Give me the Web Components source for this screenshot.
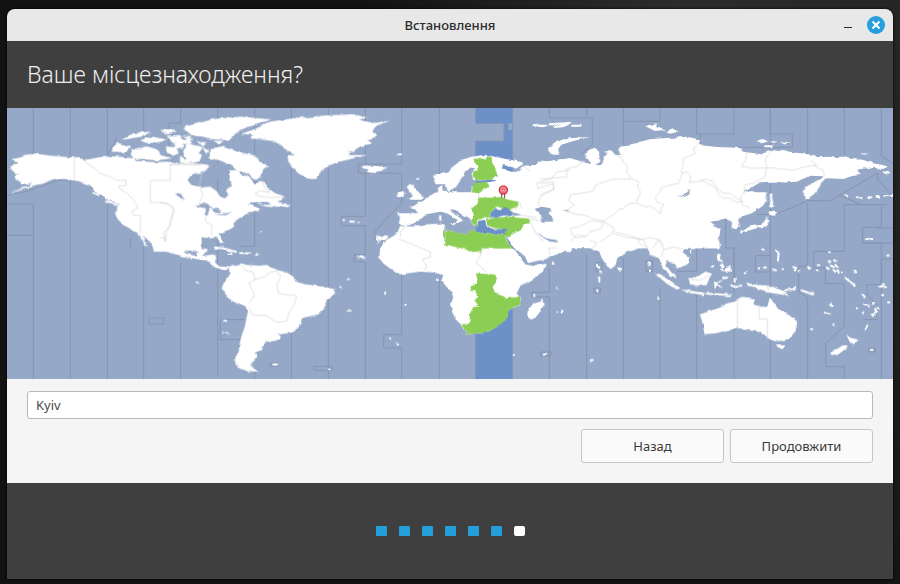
<!DOCTYPE html>
<html lang="uk">
<head>
<meta charset="utf-8">
<meta name="viewport" content="width=device-width, initial-scale=1">
<title>Встановлення</title>
<style>
  html { height: 100%; background: #131313; }
  body {
    margin: 0; min-height: 100%; box-sizing: border-box; padding: 9px 7px 5px;
    display: flex; font-family: "Noto Sans", "Open Sans", sans-serif; font-size: 13px;
    background:
      linear-gradient(90deg, transparent 40%, #2c2c2c 75%, #252525) top / 100% 10px no-repeat,
      linear-gradient(#262624, #1f1e1b 60%, #151515) right / 12px 100% no-repeat,
      #121212;
  }
  installer-window { flex: 1; }
</style>
</head>
<body>
<installer-window>
  <title-bar slot="titlebar">Встановлення</title-bar>
  <page-heading slot="heading">Ваше місцезнаходження?</page-heading>
  <zone-map></zone-map>
  <location-form></location-form>
  <step-dots slot="footer" total="7" done="6"></step-dots>
</installer-window>

<template id="map-template">
<style>
  :host { display: block; background: #95a8c7; }
  svg { display: block; width: 100%; height: auto; }
  .lines path { fill: none; stroke: #8595b1; stroke-width: 3; }
  .borders path { fill: none; stroke: #d2d2d2; stroke-width: 2; stroke-linejoin: round; }
  .land { fill: #fff; }
  .sea { fill: #95a8c7; }
  .zone { fill: #6d90c8; }
  .green { fill: #8bce53; }
  .isles { fill: none; stroke: #fff; stroke-width: 6; stroke-linecap: round; }
</style>
<svg viewBox="0 0 2658 813" role="img" aria-label="Карта часових поясів">
  <defs>
    <filter id="coast" filterUnits="userSpaceOnUse" x="0" y="0" width="2658" height="813" color-interpolation-filters="sRGB">
      <feTurbulence type="fractalNoise" baseFrequency="0.05" numOctaves="3" seed="4" result="n"/>
      <feDisplacementMap in="SourceGraphic" in2="n" scale="10" xChannelSelector="R" yChannelSelector="G"/>
    </filter>
  </defs>
  <path class="zone" d="M1406,0H1517V46H1504V66H1517V813H1406V99H1491V46H1406Z"/>
  <!-- zone limits over the sea -->
  <g class="lines">
    <path d="M79,0V137M190,0V150M190,210V813M301,0V140L330,90M410,0V70M301,265V813M-5,288H79V382H-5M79,382V813M0,262L60,250 150,218 190,215M410,400V813"/>
    <path d="M521,0V45H487V118M521,465V813M632,0V800M743,0V415M743,790V813M853,0V813M964,0V813M1075,0V168H1054V196H1184M1075,196V325H1003V353H1075V440H1041V462H1075V813M743,415H700M370,390V420H378"/>
    <path d="M1184,0V168H1075M1184,196V285L1104,370V395M1184,500V680H1130V720H1184V813M1297,0V200M1297,510V813M1406,680V813M1517,0V160M1517,590V813M1406,0V46H1491V99H1406V140M1627,480V553H1575V567H1627V813"/>
    <path d="M1627,0V30H1756V110L1720,140M1739,0V30M1739,440V813M1849,0V110M1959,0V40H1849M1849,450V813M1959,540V813M2069,0V78H2181V0M2069,490H2010M2069,490V420M2069,560V813M2181,813V600M2181,560V420H2156V300M2181,420V510M2290,0V78H2356V118H2180M2402,0V150M2402,285V475H2375V550L2402,570V813M2512,0V150M2512,290H2640M2623,0V145L2658,165M2080,78V112M2402,278L2310,318 2250,320M2402,278H2470L2612,195M2612,195V215L2658,265M2492,260L2560,289M2290,0V813"/>
    <path d="M2290,443H2245V492H2290M2512,430H2420V480H2455V527H2512V655L2456,705V776H2512V813M2623,290V358H2567V405H2623V530H2580V560L2610,590V635H2570M2658,453H2623V813M2567,405H2658M2512,290V430M2607,360H2658"/>
    <path d="M790,765H815V775H790ZM921,775H975V787H921ZM640,635H712M640,635V695H700M1600,732H1632V744H1600ZM1767,463H1785V492H1767ZM1761,540H1780V555H1761ZM1917,458H1937V490H1917ZM2585,720H2605V732H2585ZM425,630H470V648H425Z"/>
  </g>
  <g filter="url(#coast)">
    <!-- Alaska, western Canada and USA -->
    <g transform="translate(-21 -9)">
      <path class="land" d="M26,184L52,178 42,166 38,162 60,158 72,150 104,146 150,152 222,158 262,164 300,156 350,154 400,160 420,168 470,172 500,170 530,176 560,172 605,178V206L575,208 562,225 575,240 605,246V440H462L455,415 440,400 428,392 434,410 444,424 436,422 422,400 414,382 400,378 375,362 355,345 345,325 350,305 357,298 340,290 322,285 306,272 285,258 270,240 235,228 195,222 170,220 150,226 130,236 118,238 105,240 90,246 60,256 28,268 55,254 80,244 98,236 65,236 60,230 45,222 46,212 60,205 45,204 38,194Z"/>
      <path class="land" d="M335,140L340,122 355,114 380,120 395,126 375,142ZM395,134L440,124 470,132 482,150 515,160 470,166 400,160 390,146ZM360,105L400,85 452,80 430,94 380,102ZM420,106L455,94 500,104 475,112 440,114ZM482,75L510,72 530,80 500,88ZM500,92L540,90 550,105 580,100 570,118 520,116ZM498,124L530,128 536,145 520,152 500,142ZM550,130L590,120 610,128 590,150 555,148ZM540,155L560,168 600,160 590,172 540,172ZM555,75L600,50 610,95 570,90Z"/>
      <path class="isles" d="M280,262L295,270M318,290L352,300M288,248L310,268"/>
    </g>
    <!-- eastern Canada, Greenland -->
    <g transform="translate(459 -9)">
      <path class="land" d="M-5,170L40,178 80,178 125,180 150,184 135,195 125,205 95,205 82,225 90,240 120,248 150,245 170,258 180,275 195,280 205,270 198,255 215,240 208,208 235,205 265,215 285,238 300,228 312,235 325,250 345,263 374,275 365,285 352,290 368,294 392,298 385,306 350,302 330,306 305,302 292,290 262,298 285,305 302,313 270,322 250,332 235,340 220,352 222,365 205,375 175,385 185,400 192,414 182,416 170,395 150,397 120,394 70,397 62,405 60,440H-10Z"/>
      <path class="land" d="M68,66L110,56 160,42 240,35 332,43 300,56 262,66 240,76 220,92 200,106 160,102 110,92 80,78ZM148,134L185,124 230,140 285,152 295,168 328,182 306,196 302,218 280,222 262,205 230,196 212,180 180,166 150,160ZM75,120L100,116 106,130 84,140ZM70,150L100,136 126,150 118,170 80,172ZM40,118L65,112 70,128 50,130ZM110,110L140,112 130,125ZM160,106L190,108 178,118ZM206,195L232,196 240,208 216,210ZM128,130L144,134 140,148ZM30,90L56,96 64,106 34,104ZM70,92L94,94 86,106Z"/>
      <path class="land" d="M246,86L290,70 330,50 400,40 500,31 580,28 625,38 596,44 640,54 692,47 650,62 636,78 652,95 620,104 640,115 600,124 578,140 565,150 620,150 580,160 540,170 510,180 485,195 465,222 440,220 415,205 400,190 385,170 382,155 402,150 375,130 350,110 300,103 272,100 280,90Z"/>
      <path class="land" d="M603,188L615,182 650,184 682,189 650,204 620,202 626,194Z"/>
      <path class="sea" d="M105,302L130,294 158,304 147,312 143,332 134,330 138,312ZM155,310L178,312 182,326 162,322ZM170,331L220,320 198,330ZM48,262L64,268 72,286 58,276ZM560,143L612,138 590,134ZM150,196L172,176 190,186 205,182 196,200 210,214 180,220 150,218ZM298,292L322,290 330,298 308,302Z"/>
      <path class="isles" d="M304,381h1M550,345h2M571,350h10M594,353h1M650,395l14,3M664,400l18,-5"/>
    </g>
    <!-- Central and South America -->
    <g transform="translate(459 381)">
      <path class="land" d="M-14,-10H66L60,15 63,40 75,55 100,61 111,62 115,48 135,40 142,42 133,55 126,63 160,58 169,66 165,82 178,95 208,96 214,100 190,105 165,97 140,76 100,70 70,64 40,56 6,45 2,30Z"/>
      <path class="land" d="M208,102L215,92 240,85 260,90 300,92 320,90 350,105 380,112 400,125 407,140 440,148 490,155 522,162 525,175 500,195 492,222 475,238 430,248 415,275 395,292 360,298 350,293 363,305 355,317 315,320 305,335 307,345 285,352 292,368 274,385 280,400 298,409 262,409 238,400 222,375 236,350 240,320 250,290 258,255 265,225 240,210 210,195 195,175 185,160 190,145 207,125Z"/>
      <path class="isles" d="M165,37L190,40 228,50M240,54L270,55M205,56h10M290,57h4M564,133h1M541,156h1M562,229h8M192,257h6M187,292h1M200,292h3M340,388h14M506,404h6M598,66l14,4M110,142h1M655,20v1M658,65v2"/>
    </g>
    <!-- Europe and western Russia -->
    <g transform="translate(1089 -9)">
      <path class="land" d="M190,222L190,210 230,200 270,168 300,156 345,149 400,160 457,172 455,180 440,190 400,180 395,190 420,200 440,200 457,184 500,178 530,170 560,164 605,160V440H440L410,400 412,370 375,374 350,368 343,352 325,348 326,364 312,362 302,345 290,334 262,322 246,312 240,316 256,330 280,345 272,350 258,358 264,346 240,330 224,322 210,320 190,324 168,328 150,345 125,358 108,366 86,356 90,340 85,325 140,325 138,315 118,308 135,300 150,290 175,275 195,263 208,262 203,250 216,240 218,256 240,262 280,262 304,262 306,245 322,236 378,228 372,223 330,228 309,225 305,205 318,190 300,188 284,205 270,228 258,246 236,258 222,238 197,238Z"/>
      <path class="land" d="M118,238L134,236 132,248 146,262 160,276 150,284 115,284 128,272 118,258 110,246ZM80,275L84,262 104,258 106,268 98,278ZM-2,188L10,182 50,188 20,202ZM535,132L555,112 600,96 606,100 570,116 560,140 552,150ZM236,358L258,357 252,364ZM208,330L214,332 214,348 206,346Z"/>
      <path class="isles" d="M142,222h2M85,148h6M490,60L520,64M540,58L600,54M555,66L590,62M22,402l8,-5M38,404l14,-6"/>
    </g>
    <!-- northern and central Asia -->
    <g transform="translate(1599 -9)">
      <path class="land" d="M-5,170L30,168 90,160 110,165 130,172 156,178 146,165 134,150 145,135 165,128 176,142 181,170 165,181 186,180 192,160 202,144 190,140 216,138 226,150 242,150 235,135 240,125 265,122 285,114 330,103 370,100 400,98 440,95 480,105 476,120 530,126 605,130V330L594,346 601,366 580,364 575,346 560,340 546,336 540,346 510,350 524,360 514,366 530,380 536,395 534,430H-5Z"/>
      <path class="land" d="M24,136L50,112 90,100 150,96 100,108 70,118 50,134 58,150 34,148ZM316,64L350,54 350,64 378,74 345,78ZM378,82L400,72 418,80 390,86Z"/>
      <path class="isles" d="M0,62h20M30,58h25M60,62L90,54M96,62h25"/>
      <path class="sea" d="M-16,312L5,305 32,310 26,326 38,340 40,356 22,360 2,350 4,332ZM410,276L432,270 450,254 448,268 428,278ZM70,314L90,316 76,320Z"/>
    </g>
    <!-- Far East -->
    <g transform="translate(2079 -9)">
      <path class="land" d="M-5,124L60,128 110,128 130,140 185,148 215,135 270,140 340,150 350,156 440,155 490,165 520,175 566,184 545,195 520,186 465,195 482,206 430,222 380,220 366,235 345,265 316,284 308,255 330,236 355,225 370,214 330,212 290,230 250,232 175,235 152,250 130,262 165,262 198,262 200,290 185,305 155,325 120,336 110,345 116,368 95,370 96,352 80,340 55,345 28,350 55,380 60,430H-5Z"/>
      <path class="land" d="M206,268L214,264 222,306 208,304ZM208,330L205,318 232,322 222,332ZM203,334L208,350 200,364 170,370 150,376 122,382 150,364 180,360 192,350ZM170,108L190,102 204,110 184,115ZM208,110L228,108 224,114ZM240,110L272,112 250,116ZM480,146L506,145 496,149Z"/>
      <path class="isles" d="M196,124h20M124,378v5M436,270l6,4M470,277h4M482,279h2M506,277h8M530,276h8M556,273h6M570,270h8M552,202l14,4M500,400h12"/>
    </g>
    <!-- Africa and Arabia -->
    <g transform="translate(1089 381)">
      <path class="land" d="M90,-26L130,-26 160,-32 215,-35 225,-30 222,-15 245,-12 270,-6 290,0 300,-14 320,-14 345,-3 405,-2 415,14 427,40 446,62 466,88 490,93 530,86 525,100 500,125 450,155 440,175 452,190 450,210 415,225 413,248 385,275 350,292 290,298 272,268 255,250 240,210 250,190 245,170 230,155 215,135 220,120 190,112 150,110 110,115 90,118 60,100 40,85 28,70 30,40 50,15 75,0 85,-15ZM520,190L524,206 500,246 484,254 471,240 476,220 490,206 510,200Z"/>
      <path class="land" d="M410,-40H600V18L590,20 560,15 545,10 505,-6 515,8 535,18 560,22 590,34 594,40 560,58 530,72 474,84 466,66 440,38 424,12 412,2Z"/>
      <path class="sea" d="M500,-8L512,-2 530,10 556,14 562,22 540,20 520,8Z"/>
      <path class="zone" d="M403,2L412,10 428,32V44L415,22Z"/>
      <path class="green" d="M317,115L375,118 383,135 368,155 375,175 405,185 408,195 420,188 450,186 452,207 415,225 413,248 385,275 350,292 290,298 275,268 298,266 300,235 310,216 328,215 312,195 325,186 315,168 297,168 305,150 325,143Z"/>
      <path class="green" d="M222,-14L245,-12 270,-6 290,0 300,-14 320,-14 345,-3 405,-2 408,14 427,40H336L335,53 265,38 222,28Z"/>
      <path class="isles" d="M18,12l5,3M30,14h4M44,12l8,-4M200,135h2M107,209h1M60,309h1M80,325h1M45,173h1M561,158h1M561,232h1M575,229h2M431,360h1M524,356h4M492,180h2M548,83h3"/>
    </g>
    <g transform="translate(1089 -9)">
      <path class="green" d="M306,160L345,163 350,152 365,155 366,172 378,190 382,210 360,224 320,225 308,215 310,200 326,195 324,180ZM314,232L350,231 358,242 348,252 326,264 306,262 308,244Z"/>
      <path class="green" d="M326,277L360,278 395,276 415,284 448,291 444,306 424,310 412,316 385,306 372,312 362,322 358,336 340,338 322,346 322,366 308,356 303,345 312,330 303,312 318,300ZM348,340L380,338 420,334 440,338 475,340 482,350 460,362 452,376 425,388 414,398 404,392 412,372 378,370 352,362Z"/>
      <path class="zone" d="M362,322L374,312 390,316 404,306 428,318V332L400,331 380,338 360,336ZM325,348L344,344 350,365 378,374 412,370 406,386 345,382 320,376Z"/>
      <path class="sea" d="M428,318L455,330 430,333Z"/>
      <path class="zone" d="M317,226L376,225 350,230 317,232Z"/>
    </g>
    <!-- southern Asia and Oceania -->
    <g transform="translate(1659 381)">
      <path class="land" d="M-5,-20H482L476,12 440,30 400,42 372,42 368,52 385,65 388,85 370,95 350,100 338,86 320,76 316,90 330,105 344,118 350,132 334,124 320,110 306,94 298,70 288,66 270,58 262,38 235,40 200,52 172,72 166,92 152,102 140,92 124,66 116,46 100,46 88,34 70,27 30,22 0,20ZM-5,30L20,38 -5,54ZM172,98L182,98 184,108 174,110ZM388,50L398,46 396,56ZM470,34L480,28 474,40Z"/>
      <path class="land" d="M284,114L302,118 330,136 362,160 350,164 320,146ZM362,164L400,168 436,174 430,180 380,173ZM386,130L410,126 436,110 456,116 448,130 440,150 410,152 390,148ZM470,58L482,56 480,72 492,84 472,76ZM496,100L512,94 512,110 494,110ZM462,140L490,136 474,144 486,158 472,154 464,162ZM558,142L578,148 600,150 630,152 660,164 690,182 660,178 620,172 600,166 584,156 562,152Z"/>
      <path class="land" d="M420,238L450,228 480,218 500,205 525,200 545,188 585,194 580,205 610,218 622,215 630,186 642,205 655,222 690,242 712,262 706,290 685,312 650,320 626,312 610,300 600,290 580,288 540,280 500,286 470,294 434,298 428,270ZM648,328L676,328 668,342 654,338ZM860,298L870,308 896,314 880,330 870,326ZM810,354L850,330 864,336 838,356 816,360Z"/>
      <path class="isles" d="M112,90l6,8M120,110l4,4M118,128v12M266,82v8M270,104v4M112,165v2M6,228h1M92,375h6M294,191h2M440,176L510,180M482,88l6,6M484,104l8,2M452,98l8,-6M490,130l14,-2M524,130v10M554,114h2M514,154l30,-2M606,44h4M596,100h2M612,98h6M640,104l8,2M668,102h4M648,46L656,54 654,74M672,166L700,162 708,156M724,166L760,178M794,230l16,6M810,206l8,6M820,268h2M756,282h1M700,96l8,4M704,106h2M716,108h2M744,96l4,2M770,106h2M776,90h2M806,78l4,4M822,76l8,2M800,98l6,4M812,92l10,4M826,90l8,6M820,104l6,6M834,106l2,6M846,112h2M810,52h2M856,128L872,142 884,150M880,110l8,2M958,154l20,2M966,148h6M906,180l8,6M912,208h8M892,220h2M908,232h2M924,210l6,2M945,222l4,12M934,240l10,-4M940,206h4M984,202h4M916,282l6,-10M932,345h6M924,10h10M982,62h4M966,180h4M950,218l6,4"/>
    </g>
  </g>
  <!-- borders between zones over land -->
  <g class="borders">
    <path transform="translate(-21 -9)" d="M222,158V226M252,164L262,176 285,190 300,204 330,216 350,226H378V242H358V250L385,268 405,290 414,308 394,320 400,330 422,332 420,384M511,178V226H451V292H490L516,304 522,320 508,350 512,362 490,384 496,410M511,178H605"/>
    <path transform="translate(459 -9)" d="M28,178H125M126,205L118,240 128,270 118,296M138,332L136,350 156,360 154,392M0,294L24,296 40,310 34,350 18,384V410M308,228L312,246 330,262 300,258 284,266 300,274 334,278 372,275"/>
    <path transform="translate(459 381)" d="M242,88L256,106 280,112 284,134 312,126 332,110 350,108M350,108L362,124 350,150 356,176 410,182 402,210 390,226 380,258 350,262 320,242 278,240 266,218M284,134L266,144 284,180 268,204M0,8H14V20"/>
    <path transform="translate(1089 -9)" d="M457,180L480,198M326,264V276M600,196L560,200 545,220 500,234 504,250 548,236 552,250 510,276 504,296 512,304M448,291L456,310M475,340L510,348M480,350L498,384 520,410M455,330L500,338M225,360L226,420M108,366L90,380 92,394"/>
    <path transform="translate(1089 381)" d="M88,12L180,50 182,66 156,74 170,92 164,108M336,40L330,66 318,82 350,112M540,60L536,40 560,38M325,53L336,53"/>
    <path transform="translate(1599 -9)" d="M128,170L112,184 80,192V216L0,222M222,146L246,160 250,172 262,182 260,202 272,220 296,230 292,244 302,262 288,294 266,296 250,310 236,314 222,328 190,348 160,342 140,332 110,328 76,318 104,300 86,286 92,268 130,264 160,258 164,244 178,236 220,222 272,222M290,294L318,306 330,302 348,316 362,328 362,312 372,298 350,292 346,276 358,264 364,248 390,240 414,236 426,206 440,200 452,214 448,232 490,228 510,240 530,250 534,266 550,280 566,278 590,292 605,290M472,122L460,130 466,146 430,160 430,180 424,196 426,206M0,236L40,230 42,254 0,270M92,370L120,364 150,348 190,350 184,370 150,380 140,394 108,398 96,388ZM190,350L222,368 214,388 180,410M222,380L270,392 300,404 330,398 360,404 370,420"/>
    <path transform="translate(2079 -9)" d="M140,142L136,168 124,184 160,190 212,188 280,196 310,186 350,180 332,166M212,140L196,160 200,188 194,216 160,234 134,240 132,262 122,274 128,300 150,308M340,182L370,196 372,214M0,226L20,222 40,230 50,250 70,264 90,266 128,290"/>
    <path transform="translate(1659 381)" d="M532,200V280M598,214V252H622V314M624,150V174M30,20L48,0 76,2M96,44L110,24 90,16M262,38L250,14 232,10 240,26 262,38M278,40L296,14 312,44 304,66M312,44L340,36 370,42M160,-4L200,8 234,10M392,132L420,136 450,120"/>
  </g>
  <!-- location pin -->
  <g transform="translate(1489 246)">
    <path d="M-5,10V23M4,10V25" stroke="#6a4a4a" stroke-width="3"/>
    <circle r="12" fill="#f9a3a6" stroke="#cf2230" stroke-width="4"/>
    <path d="M-6,-3H6M-6,4Q0,9 6,4" stroke="#d04450" stroke-width="3" fill="none"/>
  </g>
</svg>
</template>

<script>
const define = (name, html, setup) => customElements.define(name, class extends HTMLElement {
  constructor() {
    super();
    this.attachShadow({ mode: 'open' }).innerHTML = html;
  }
  connectedCallback() { if (setup) setup(this, this.shadowRoot); }
});

define('installer-window', `
<style>
  :host { display: flex; flex-direction: column; overflow: hidden; border-radius: 8px 8px 0 0; background: #3f3f3f; box-shadow: 0 0 3px #000; }
  main { background: #f5f5f5; }
  footer { flex: 1; display: grid; place-items: center; min-height: 64px; }
</style>
<slot name="titlebar"></slot>
<slot name="heading"></slot>
<main><slot></slot></main>
<footer><slot name="footer"></slot></footer>`);

define('title-bar', `
<style>
  :host { display: grid; grid-template-columns: 1fr auto 1fr; align-items: center; height: 32px; padding: 0 8px; background: #e8e8e8; color: #2b2b2b; font-weight: 500; }
  .name { grid-column: 2; }
  .controls { display: flex; justify-content: flex-end; gap: 10px; }
  button { width: 18px; height: 18px; padding: 0; border: 0; background: none; }
  svg { display: block; }
</style>
<span class="name"><slot></slot></span>
<div class="controls">
  <button aria-label="Згорнути"><svg width="18" height="18"><path d="M5 11.5h8" stroke="#2b2b2b"/></svg></button>
  <button aria-label="Закрити"><svg width="18" height="18"><circle cx="9" cy="9" r="9" fill="#259fdb"/><path d="M5.5 5.5l7 7m0-7l-7 7" stroke="#fff" stroke-width="2"/></svg></button>
</div>`);

define('page-heading', `
<style>
  :host { display: block; padding: 0 20px; background: #3f3f3f; color: #eee; }
  h1 { margin: 0; font-size: 23px; line-height: 67px; font-weight: 300; }
</style>
<h1><slot></slot></h1>`);

define('push-button', `
<style>
  :host { display: block; width: 143px; }
  button { width: 100%; height: 34px; padding: 0; border: 1px solid #c6c6c6; border-radius: 3px; background: #fafafa; color: #3b3b3b; font: inherit; }
</style>
<button type="button"><slot></slot></button>`);

define('location-form', `
<style>
  :host { display: block; padding: 12px 20px 20px; }
  form { display: grid; gap: 10px; }
  input { box-sizing: border-box; width: 100%; height: 28px; padding: 0 8px; border: 1px solid #b9b9b9; border-radius: 3px; background: #fff; color: #4a4a4a; font: inherit; }
  .actions { display: flex; justify-content: flex-end; gap: 6px; }
</style>
<form>
  <input type="text" value="Kyiv" aria-label="Місто">
  <div class="actions"><push-button>Назад</push-button><push-button>Продовжити</push-button></div>
</form>`);

define('step-dots', `
<style>
  :host { display: block; }
  ol { display: flex; gap: 12px; margin: 0; padding: 0; list-style: none; }
  li { width: 11px; height: 10px; background: #259fdb; border-radius: 1px; }
  li.left { background: #fff; border-radius: 2px; }
</style>
<ol></ol>`, (host, root) => {
  const done = Number(host.getAttribute('done'));
  root.querySelector('ol').replaceChildren(...Array.from({ length: Number(host.getAttribute('total')) }, (_, i) => {
    const li = document.createElement('li');
    if (i >= done) li.className = 'left';
    return li;
  }));
});

customElements.define('zone-map', class extends HTMLElement {
  constructor() {
    super();
    this.attachShadow({ mode: 'open' }).append(document.getElementById('map-template').content.cloneNode(true));
  }
});
</script>
</body>
</html>
